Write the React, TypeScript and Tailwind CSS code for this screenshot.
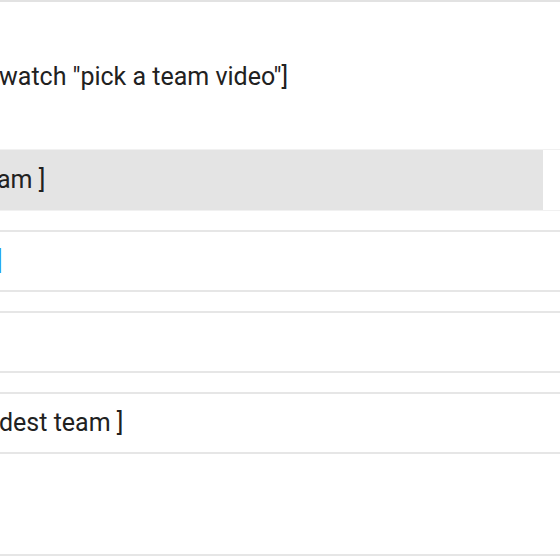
const rows = [
  { id: "link", text: "]", blue: true },
  { id: "empty", text: "" },
  { id: "modest", text: "dest team ]" },
];

export default function App() {
  return (
    <div className="h-[560px] w-[560px] overflow-hidden bg-white font-['Roboto',sans-serif] text-[25px] text-[#212121]">
      <div className="border-t-2 border-[#e2e2e2]">
        <div className="flex h-[147px] items-start pt-[58px]">
          <p className="-ml-[1px] leading-[34px]">watch "pick a team video"]</p>
        </div>

        <div className="flex h-[62px] border-y border-[#f1f1f1]">
          <div className="flex w-[543px] items-center bg-[#e4e4e4]">
            <span className="-ml-[3px] leading-[34px]">am ]</span>
          </div>
        </div>

        <div className="mt-[19px] flex flex-col gap-[19px]">
          {rows.map((row) => (
            <div
              key={row.id}
              className="flex h-[62px] items-center border-y-2 border-[#e6e6e6]"
            >
              {row.text && (
                <span
                  className={
                    row.blue
                      ? "-ml-[4px] leading-[34px] text-[#1e95e8]"
                      : "-ml-[1px] leading-[34px]"
                  }
                >
                  {row.text}
                </span>
              )}
            </div>
          ))}
        </div>

        <div className="h-[102px] border-b-2 border-[#e6e6e6]" />
      </div>
    </div>
  );
}
